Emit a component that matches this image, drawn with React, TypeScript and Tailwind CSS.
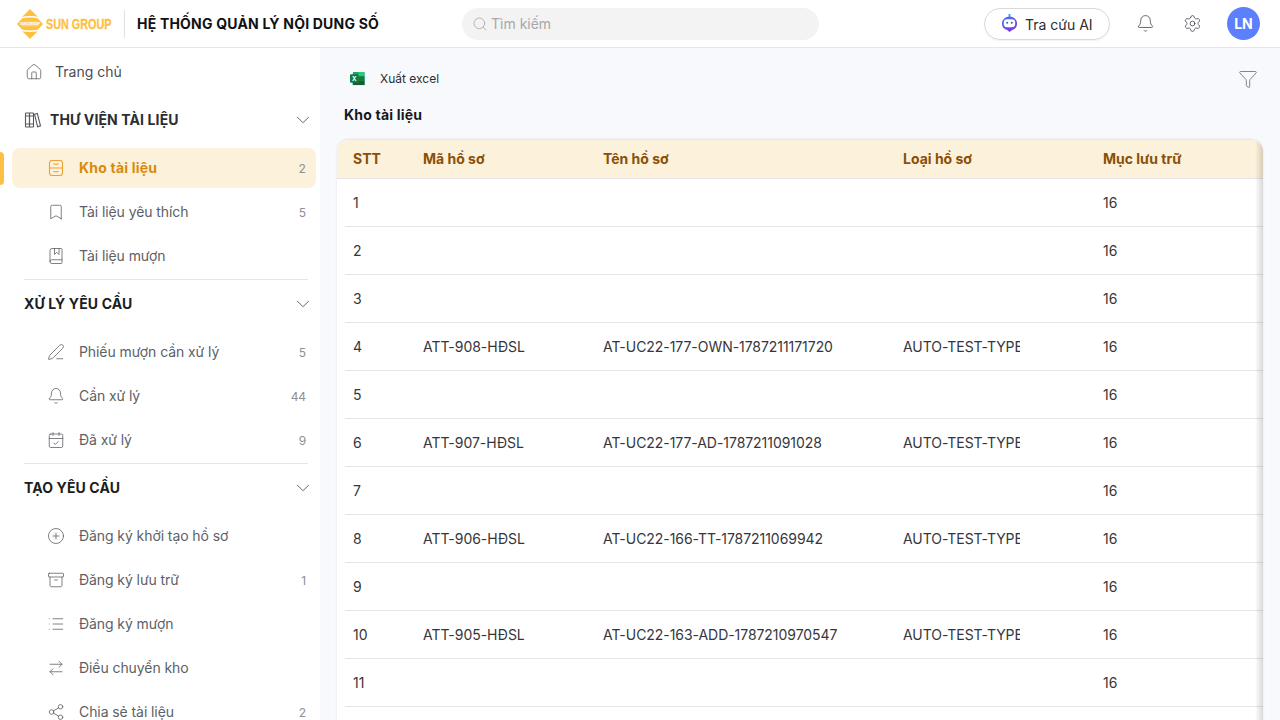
import * as React from "react";
import {
  Home, ChevronDown, Bookmark, BookMarked, PenLine, Bell, CalendarCheck, CirclePlus,
  Archive, List, ArrowRightLeft, Share2, Search, Settings, Funnel,
} from "lucide-react";

type MenuItem = { label: string; icon: React.ElementType; count?: number; active?: boolean };

const Drawer: React.FC<{ className?: string; strokeWidth?: number }> = ({ className }) => (
  <svg viewBox="0 0 18 18" fill="none" stroke="currentColor" strokeWidth="1.1" className={className}>
    <rect x="2.500" y="1.500" width="13" height="15" rx="2.500" />
    <path d="M2.500 9h13M7 4.500v.8h4v-.8M7 12v.8h4V12" />
  </svg>
);

const BooksIcon: React.FC<{ className?: string }> = ({ className }) => (
  <svg viewBox="0 0 18 18" fill="none" stroke="currentColor" strokeWidth="1.1" className={className}>
    <rect x="1.500" y="2" width="4" height="14" rx="0.6" />
    <rect x="5.500" y="2" width="4" height="14" rx="0.6" />
    <path d="M1.500 5h8M1.500 13h8" />
    <path d="M10.500 3.200l2.800-.8 3.200 12.500-2.900.9z" />
  </svg>
);

const SunLogo = () => (
  <svg viewBox="0 0 26 30" className="h-[30px] w-[26px] shrink-0">
    <path d="M13 0 L21 8 C17 6.800 9 6.800 5 8 Z" fill="#fdc040" />
    <path d="M13 30 L5 22 C9 23.200 17 23.200 21 22 Z" fill="#fdc040" />
    <path d="M0 15 L5 9.500 C9 8.300 17 8.300 21 9.500 L26 15 L21 20.500 C17 21.700 9 21.700 5 20.500 Z" fill="#fdc040" />
    <rect x="4.500" y="12.500" width="17" height="5" rx="1" fill="#fbd27a" />
    <text x="13" y="16.300" textAnchor="middle" fontSize="3.400" fontWeight="700" fill="#fff" fontFamily="Inter, sans-serif">SUN GROUP</text>
  </svg>
);

const BotIcon = () => (
  <svg viewBox="0 0 18 20" className="h-[19px] w-[17px] shrink-0">
    <defs>
      <linearGradient id="botFill" x1="0" y1="0" x2="1" y2="1">
        <stop offset="0" stopColor="#3b7df0" />
        <stop offset="1" stopColor="#8a2be2" />
      </linearGradient>
    </defs>
    <rect x="8" y="0" width="2" height="3" fill="#3b9cf0" />
    <path d="M9 2.500a8 7.500 0 0 1 8 7.500 8 7.500 0 0 1-5 7l-3 2-2.500-2a8 7.500 0 0 1-5.500-7 8 7.500 0 0 1 8-7.500z" fill="url(#botFill)" />
    <rect x="3" y="5.500" width="12" height="8.500" rx="3.500" fill="#fff" />
    <circle cx="6.600" cy="9.200" r="1.100" fill="#3a5be0" />
    <circle cx="11.400" cy="9.200" r="1.100" fill="#3a5be0" />
  </svg>
);

const ExcelIcon = () => (
  <svg viewBox="0 0 16 16" className="h-[15px] w-[15px] shrink-0">
    <rect x="3" y="1" width="12.500" height="14" rx="1" fill="#21a366" />
    <rect x="9" y="1" width="6.500" height="4.700" fill="#33c481" />
    <rect x="3" y="10.300" width="12.500" height="4.700" fill="#185c37" />
    <rect x="9" y="5.700" width="6.500" height="4.600" fill="#107c41" />
    <rect x="0" y="3.500" width="9" height="9" rx="1" fill="#107c41" />
    <text x="4.500" y="10.500" textAnchor="middle" fontSize="6.500" fontWeight="700" fill="#fff" fontFamily="Inter, sans-serif">X</text>
  </svg>
);

const group1: MenuItem[] = [
  { label: "Kho tài liệu", icon: Drawer, count: 2, active: true },
  { label: "Tài liệu yêu thích", icon: Bookmark, count: 5 },
  { label: "Tài liệu mượn", icon: BookMarked },
];
const group2: MenuItem[] = [
  { label: "Phiếu mượn cần xử lý", icon: PenLine, count: 5 },
  { label: "Cần xử lý", icon: Bell, count: 44 },
  { label: "Đã xử lý", icon: CalendarCheck, count: 9 },
];
const group3: MenuItem[] = [
  { label: "Đăng ký khởi tạo hồ sơ", icon: CirclePlus },
  { label: "Đăng ký lưu trữ", icon: Archive, count: 1 },
  { label: "Đăng ký mượn", icon: List },
  { label: "Điều chuyển kho", icon: ArrowRightLeft },
  { label: "Chia sẻ tài liệu", icon: Share2, count: 2 },
];

const rows = [
  { stt: 1 }, { stt: 2 }, { stt: 3 },
  { stt: 4, code: "ATT-908-HĐSL", name: "AT-UC22-177-OWN-1787211171720", type: "AUTO-TEST-TYPE" },
  { stt: 5 },
  { stt: 6, code: "ATT-907-HĐSL", name: "AT-UC22-177-AD-1787211091028", type: "AUTO-TEST-TYPE" },
  { stt: 7 },
  { stt: 8, code: "ATT-906-HĐSL", name: "AT-UC22-166-TT-1787211069942", type: "AUTO-TEST-TYPE" },
  { stt: 9 },
  { stt: 10, code: "ATT-905-HĐSL", name: "AT-UC22-163-ADD-1787210970547", type: "AUTO-TEST-TYPE" },
  { stt: 11 }, { stt: 12 },
];

const SideItem: React.FC<{ item: MenuItem }> = ({ item }) => {
  const Icon = item.icon;
  return (
    <div className="relative h-11 shrink-0">
      {item.active && <div className="absolute left-0 top-[4px] h-[33px] w-1 rounded-r bg-[#fdc040]" />}
      <div
        className={`ml-3 mr-1 flex h-10 items-center rounded-lg pl-[35px] pr-[10px] ${
          item.active ? "bg-[#fcf1da] text-[#d98a0b] font-bold tracking-[0.2px]" : "text-[#5c5f66] tracking-[-0.08px]"
        }`}
      >
        <Icon className={`h-[18px] w-[18px] shrink-0 ${item.active ? "text-[#e9a135]" : "text-[#55585e]"}`} strokeWidth={1} />
        <span className="ml-[14px] flex-1 text-sm leading-5">{item.label}</span>
        {item.count !== undefined && <span className="mt-px text-xs font-normal text-[#8d9096]">{item.count}</span>}
      </div>
    </div>
  );
};

const SectionHead: React.FC<{ title: string; icon?: boolean }> = ({ title, icon }) => (
  <div className="flex h-12 shrink-0 items-center pl-6 pr-[6px] text-[#1c1d21]">
    {icon && <BooksIcon className="mr-2 h-[18px] w-[18px] shrink-0 text-[#55585e]" />}
    <span className={`flex-1 text-sm font-bold leading-5 tracking-[0.12px] ${icon ? "text-[#2c2e33]" : ""}`}>{title}</span>
    <ChevronDown className="h-[22px] w-[22px] text-[#55585e]" strokeWidth={1} />
  </div>
);

const Divider = () => <div className="-mb-px ml-6 mr-3 h-px shrink-0 -translate-y-px bg-[#e5e5e5]" />;

const Sidebar = () => (
  <aside className="flex w-[320px] shrink-0 flex-col overflow-hidden bg-white">
    <div className="flex h-12 shrink-0 items-center pl-[25px] text-[#4a4d53]">
      <Home className="h-[18px] w-[18px] text-[#55585e]" strokeWidth={1} />
      <span className="ml-3 text-sm">Trang chủ</span>
    </div>
    <SectionHead title="THƯ VIỆN TÀI LIỆU" icon />
    <div className="flex flex-col pt-[4px]">
      {group1.map((item) => <SideItem key={item.label} item={item} />)}
    </div>
    <Divider />
    <SectionHead title="XỬ LÝ YÊU CẦU" />
    <div className="flex flex-col pt-[4px]">
      {group2.map((item) => <SideItem key={item.label} item={item} />)}
    </div>
    <Divider />
    <SectionHead title="TẠO YÊU CẦU" />
    <div className="flex flex-col pt-[4px]">
      {group3.map((item) => <SideItem key={item.label} item={item} />)}
    </div>
  </aside>
);

const Header = () => (
  <header className="flex h-12 shrink-0 items-center border-b border-[#e5e5e5] bg-white">
    <div className="flex w-[462px] shrink-0 items-center pl-[17px]">
      <SunLogo />
      <div className="ml-[3px] w-[78px] shrink-0">
        <span className="block origin-left scale-x-[0.72] whitespace-nowrap font-['Liberation_Sans',sans-serif] text-[15px] font-bold leading-none text-[#fdc040] [-webkit-text-stroke:0.3px_#fdc040]">
          SUN GROUP
        </span>
      </div>
      <div className="h-7 w-px shrink-0 bg-[#e0e0e0]" />
      <span className="ml-3 whitespace-nowrap text-sm font-bold tracking-[0.2px] text-[#111]">HỆ THỐNG QUẢN LÝ NỘI DUNG SỐ</span>
    </div>
    <div className="flex h-8 w-[357px] items-center rounded-full bg-[#f3f3f3] pl-[10px] text-[#a8a8a8]">
      <Search className="h-4 w-4" strokeWidth={1.25} />
      <span className="ml-[3px] text-sm">Tìm kiếm</span>
    </div>
    <div className="ml-auto flex items-center pr-[20px]">
      <div className="flex h-8 w-[126px] items-center rounded-full border border-[#d9d9d9] pl-4 shadow-[0_1px_2px_rgba(0,0,0,0.06)]">
        <BotIcon />
        <span className="ml-[7px] pt-[2px] text-sm text-[#2c2e33]">Tra cứu AI</span>
      </div>
      <Bell className="ml-[26px] h-[19px] w-[19px] text-[#3f4147]" strokeWidth={1} />
      <Settings className="ml-[28px] h-[19px] w-[19px] text-[#3f4147]" strokeWidth={1} />
      <div className="ml-[25px] flex h-[33px] w-[33px] items-center justify-center rounded-full bg-[#5c80fb] text-sm font-bold text-white">LN</div>
    </div>
  </header>
);

const cols = "grid grid-cols-[70px_180px_300px_200px_1fr]";

const DocTable = () => (
  <div className="relative overflow-hidden rounded-t-xl border-t border-[#e8e8e8] bg-white shadow-[0_0_3px_rgba(0,0,0,0.08)]">
    <div className={`${cols} h-[39px] items-center border-b border-[#e5e5e5] bg-[#fcf1da] pl-2 text-sm font-bold text-[#8a4f08]`}>
      <div className="px-2">STT</div>
      <div className="px-2">Mã hồ sơ</div>
      <div className="px-2">Tên hồ sơ</div>
      <div className="px-2">Loại hồ sơ</div>
      <div className="px-2">Mục lưu trữ</div>
    </div>
    {rows.map((row) => (
      <div key={row.stt} className={`${cols} ml-2 h-12 items-center border-b border-[#e5e5e5] pt-px text-sm tracking-[-0.05px] text-[#34363b]`}>
        <div className="px-2">{row.stt}</div>
        <div className="px-2">{row.code}</div>
        <div className="px-2">{row.name}</div>
        <div className="px-2"><div className="w-[117px] overflow-hidden whitespace-nowrap">{row.type}</div></div>
        <div className="px-2">16</div>
      </div>
    ))}
    <div className="absolute bottom-0 right-0 top-0 w-2 bg-gradient-to-l from-black/15 to-transparent" />
  </div>
);

const Main = () => (
  <main className="flex-1 overflow-hidden bg-[#f8f9fc] px-[17px]">
    <div className="flex h-[57px] items-center pl-[13px] pt-[4px]">
      <ExcelIcon />
      <span className="ml-[15px] text-xs text-[#2c2e33]">Xuất excel</span>
      <Funnel className="ml-auto mr-[5px] h-5 w-5 text-[#6b6e75]" strokeWidth={1} />
    </div>
    <h2 className="mb-[14px] pl-[7px] text-sm font-bold leading-5 tracking-[0.2px] text-[#17181c]">Kho tài liệu</h2>
    <DocTable />
  </main>
);

export default function App() {
  return (
    <div className="flex h-screen w-full flex-col overflow-hidden bg-white font-['Inter',sans-serif]">
      <Header />
      <div className="flex min-h-0 flex-1">
        <Sidebar />
        <Main />
      </div>
    </div>
  );
}
